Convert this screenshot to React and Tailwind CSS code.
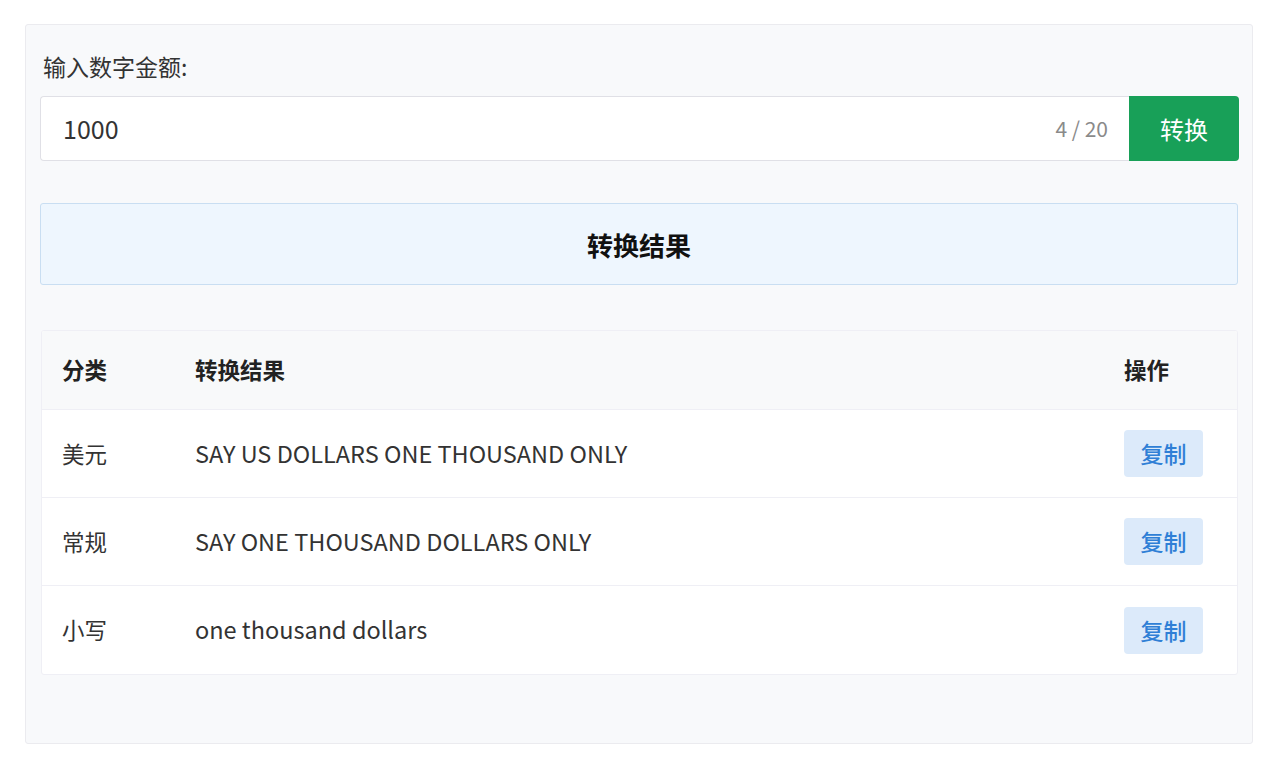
const rows = [
  { type: "美元", text: "SAY US DOLLARS ONE THOUSAND ONLY" },
  { type: "常规", text: "SAY ONE THOUSAND DOLLARS ONLY" },
  { type: "小写", text: "one thousand dollars" },
];

function App() {
  return (
    <div
      className="min-h-[770px] bg-white pt-[24px] pl-[25px] pr-[27px]"
      style={{ fontFamily: '"Noto Sans CJK SC", "Noto Sans", sans-serif' }}
    >
      <div className="h-[720px] rounded-[3px] border border-[#ebebef] bg-[#f8f9fb] pl-[14px] pr-[13px] pt-[27px]">
        <div className="pl-[3px] text-[23px] leading-[28px] text-[#333]">输入数字金额:</div>

        <div className="mt-[16px] flex h-[65px]">
          <div className="flex flex-1 items-center rounded-l-[4px] border border-r-0 border-[#e0e0e6] bg-white pl-[22px] pr-[21px]">
            <span className="flex-1 text-[25px] text-[#333]">1000</span>
            <span className="text-[21px] text-[#8a8a8a]">4 / 20</span>
          </div>
          <button
            type="button"
            className="w-[110px] rounded-r-[4px] bg-[#18a058] text-[24px] text-white"
          >
            转换
          </button>
        </div>

        <div className="mt-[42px] mr-[1px] flex h-[82px] items-center justify-center rounded-[3px] border border-[#c9def2] bg-[#eef6fe] text-[26px] font-bold text-[#111]">
          转换结果
        </div>

        <div className="mt-[45px] ml-[1px] mr-[1px] overflow-hidden rounded-[3px] border border-[#efeff5] bg-white">
          <div className="flex h-[79px] items-center border-b border-[#efeff5] bg-[#f8f9fa] text-[22.5px] font-semibold text-[#222]">
            <div className="w-[153px] pl-[20px]">分类</div>
            <div className="flex-1">转换结果</div>
            <div className="w-[113px]">操作</div>
          </div>
          {rows.map((row, i) => (
            <div
              key={row.type}
              className={`flex h-[88px] items-center text-[23.5px] text-[#333] ${
                i < rows.length - 1 ? "border-b border-[#efeff5]" : ""
              }`}
            >
              <div className="w-[153px] pl-[20px] text-[22.5px]">{row.type}</div>
              <div className="flex-1">{row.text}</div>
              <div className="w-[113px]">
                <button
                  type="button"
                  className="h-[47px] w-[79px] rounded-[4px] bg-[#dceafa] text-[23px] font-medium text-[#2f7fd6]"
                >
                  复制
                </button>
              </div>
            </div>
          ))}
        </div>
      </div>
    </div>
  );
}

export default App;
